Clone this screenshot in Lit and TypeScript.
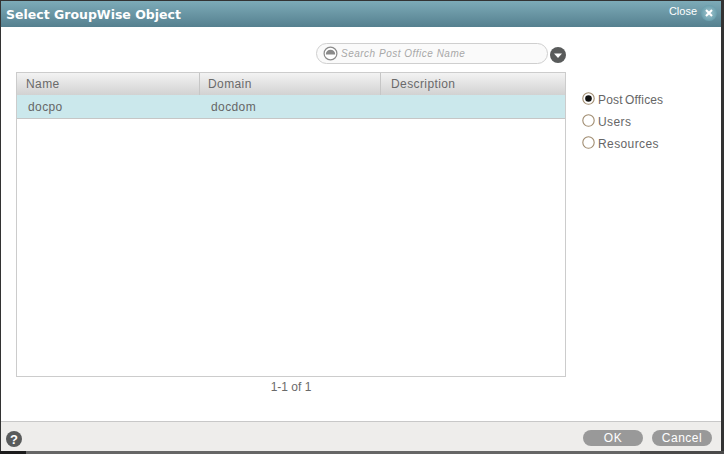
import { LitElement, html, svg, css } from "lit";
import { customElement } from "lit/decorators.js";

@customElement("app-root")
export class AppRoot extends LitElement {
  static styles = css`
    :host { display: block; width: 724px; height: 454px; background: linear-gradient(to right, #1c1c1c 26px, #666 26px, #666 640px, #4a4a4a 640px) bottom / 100% 3px no-repeat, #333; overflow: hidden; font-family: "Liberation Sans", Arial, sans-serif; }
    .dialog { width: 720px; height: 450px; margin: 1px 0 0 1px; display: flex; flex-direction: column; background: #fff; }
    .head { height: 26px; flex: none; display: flex; align-items: center; justify-content: space-between; padding: 0 4px 0 5px; box-sizing: border-box; background: linear-gradient(#7dabb8, #55808f); }
    .title { font: bold 12.5px "DejaVu Sans", sans-serif; color: #fff; }
    .close { display: flex; align-items: center; gap: 4px; color: #fff; font-size: 11px; }
    .close span { position: relative; top: -3px; }
    .close svg { display: block; width: 16px; height: 16px; position: relative; top: -1px; }
    .body { flex: 1; display: flex; padding: 16px 0 0 15px; box-sizing: border-box; min-height: 0; }
    .main { width: 550px; flex: none; display: flex; flex-direction: column; }
    .search-row { display: flex; justify-content: flex-end; align-items: center; gap: 2px; height: 21px; margin-bottom: 8px; }
    .search { width: 232px; height: 21px; box-sizing: border-box; border: 1px solid #cfcfcf; border-radius: 11px; background: #fafafa; display: flex; align-items: center; gap: 3px; padding-left: 6px; font: italic 10px "Liberation Sans", sans-serif; letter-spacing: 0.5px; color: #a8a8a8; }
    .search svg { width: 15px; height: 15px; flex: none; }
    .arrow { width: 16px; height: 16px; display: block; flex: none; position: relative; top: 1px; }
    .table { height: 305px; box-sizing: border-box; border: 1px solid #cccccc; display: flex; flex-direction: column; }
    .thead, .row { display: grid; grid-template-columns: 183px 181px 1fr; font-size: 12px; letter-spacing: 0.4px; }
    .thead { height: 22px; background: linear-gradient(#f3f3f3, #d2d2d2); color: #6a6a6a; align-items: center; }
    .thead div { padding-left: 9px; height: 100%; display: flex; align-items: center; box-sizing: border-box; border-right: 1px solid #c6c6c6; }
    .thead div:nth-child(2) { padding-left: 8px; }
    .thead div:last-child { border-right: 0; padding-left: 10px; }
    .row { height: 24px; box-sizing: border-box; background: #cbe8ec; border-bottom: 1px solid #c6c6c6; color: #666; align-items: center; }
    .row div { padding-left: 11px; }
    .pager { text-align: center; font-size: 12px; color: #6a6a6a; margin-top: 3px; line-height: 14px; }
    .side { margin: 46px 0 0 16px; display: flex; flex-direction: column; }
    .opt { display: flex; align-items: center; gap: 3px; height: 22px; font-size: 12px; letter-spacing: 0.4px; color: #666; }
    .opt.tight { letter-spacing: 0.15px; word-spacing: -1px; }
    .opt svg { width: 13px; height: 13px; position: relative; top: -2px; }
    .foot { height: 30px; flex: none; box-sizing: border-box; border-top: 1px solid #c8c8c8; background: #eeedeb; display: flex; align-items: center; justify-content: space-between; padding: 0 9px 0 5px; }
    .foot svg { width: 16px; height: 16px; display: block; position: relative; top: 2px; }
    .btns { display: flex; gap: 9px; position: relative; top: 1px; }
    .btn { width: 60px; height: 16px; border-radius: 8px; background: #999; color: #fff; text-align: center; font-size: 12px; line-height: 16px; letter-spacing: 0.5px; }
  `;

  private radio(on: boolean) {
    return html`<svg viewBox="0 0 13 13"><circle cx="6.5" cy="6.5" r="5.7" fill="#fff" stroke="#a08c70" stroke-width="1.1"/>${on ? svg`<circle cx="6.5" cy="6.5" r="3.3" fill="#111"/>` : ""}</svg>`;
  }

  render() {
    return html`
      <div class="dialog">
        <div class="head">
          <div class="title">Select GroupWise Object</div>
          <div class="close"><span>Close</span>
            <svg viewBox="0 0 16 16">
              <defs><radialGradient id="cg"><stop offset="0" stop-color="#a3c6cf"/><stop offset="1" stop-color="#6a9fad"/></radialGradient></defs>
              <circle cx="8" cy="8" r="8" fill="url(#cg)"/><path d="M5 5l6 6M11 5l-6 6" stroke="#fff" stroke-width="2"/>
            </svg>
          </div>
        </div>
        <div class="body">
          <div class="main">
            <div class="search-row">
              <div class="search">
                <svg viewBox="0 0 15 15"><circle cx="7.5" cy="7.5" r="6.4" fill="#fff" stroke="#8a8a8a" stroke-width="1.2"/><path d="M2.8 8.4a4.7 4.7 0 0 1 9.4 0z" fill="#8a8a8a"/></svg>
                <span>Search Post Office Name</span>
              </div>
              <svg class="arrow" viewBox="0 0 16 16"><circle cx="8" cy="8" r="8" fill="#595b5b"/><path d="M4 6.5h8l-4 4.5z" fill="#fff"/></svg>
            </div>
            <div class="table">
              <div class="thead"><div>Name</div><div>Domain</div><div>Description</div></div>
              <div class="row"><div>docpo</div><div>docdom</div><div></div></div>
            </div>
            <div class="pager">1-1 of 1</div>
          </div>
          <div class="side">
            <div class="opt tight">${this.radio(true)}Post Offices</div>
            <div class="opt">${this.radio(false)}Users</div>
            <div class="opt">${this.radio(false)}Resources</div>
          </div>
        </div>
        <div class="foot">
          <svg viewBox="0 0 16 16"><circle cx="8" cy="8" r="8" fill="#595b5b"/><text x="8" y="12.5" text-anchor="middle" font-family="Liberation Sans" font-weight="bold" font-size="13" fill="#fff">?</text></svg>
          <div class="btns"><div class="btn">OK</div><div class="btn">Cancel</div></div>
        </div>
      </div>
    `;
  }
}
